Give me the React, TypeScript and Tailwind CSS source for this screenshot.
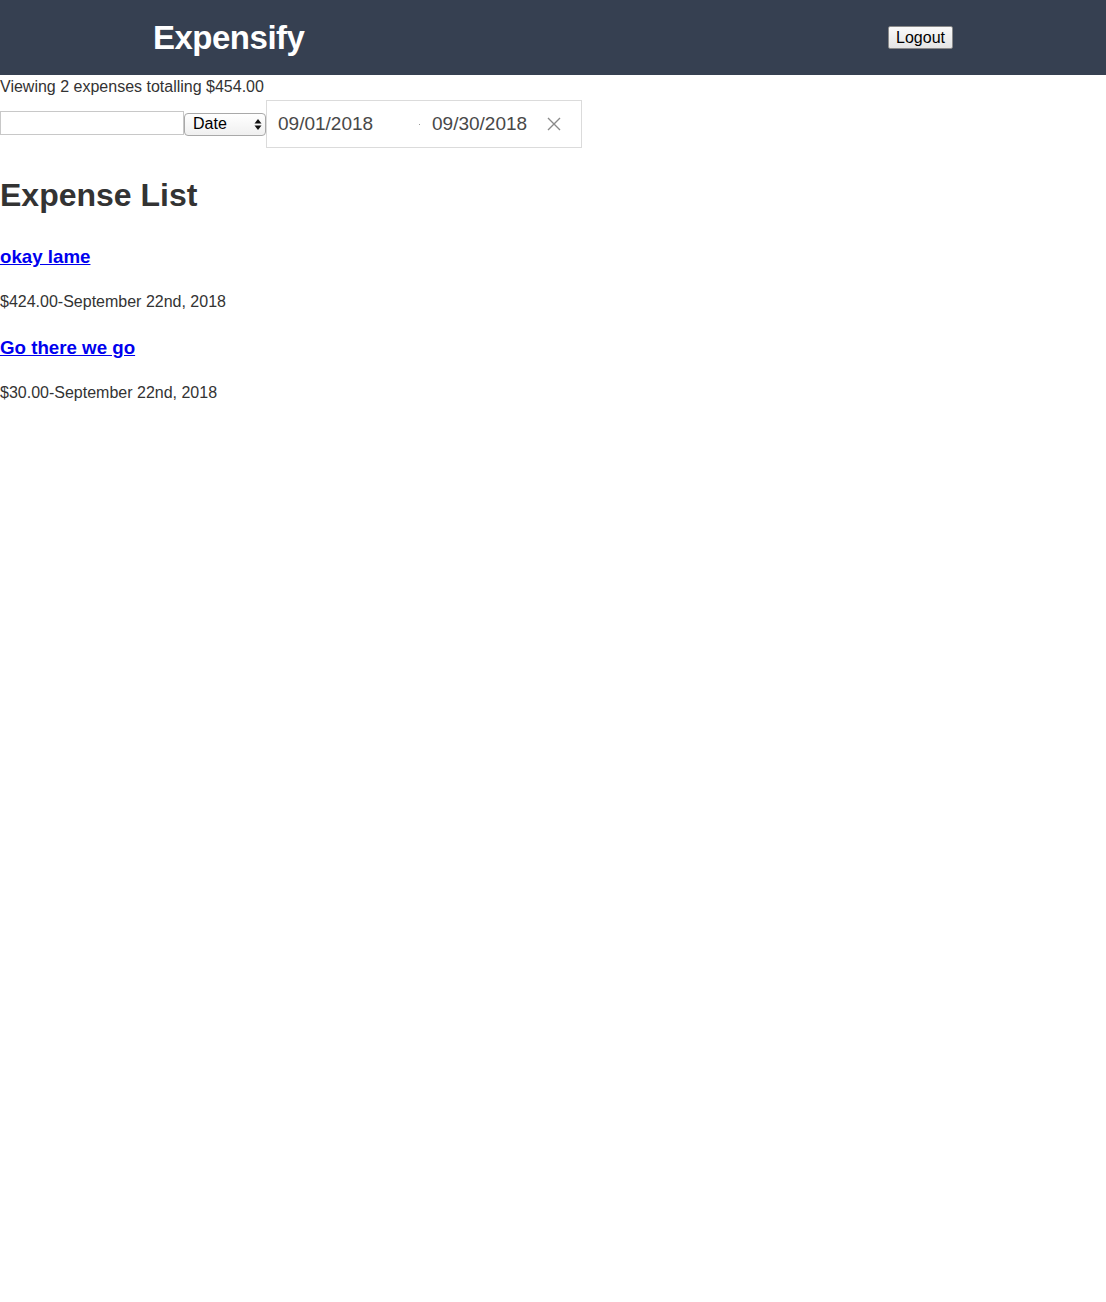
const expenses = [
  { id: "1", description: "okay lame", amount: "$424.00", date: "September 22nd, 2018" },
  { id: "2", description: "Go there we go", amount: "$30.00", date: "September 22nd, 2018" },
];

const Header = () => (
  <header className="h-[75px] bg-[#364051]">
    <div className="mx-auto flex h-full max-w-[800px] items-center justify-between">
      <h1 className="m-0 text-[33px] font-bold tracking-[-0.5px] text-white">Expensify</h1>
      <button className="h-[23px] rounded-[2px] border border-[#8a8a8a] bg-gradient-to-b from-[#fafafa] to-[#e4e4e4] px-[7px] text-[16px] leading-none text-black">
        Logout
      </button>
    </div>
  </header>
);

const Filters = () => (
  <div className="flex items-center">
    <input
      type="text"
      className="mb-[2px] h-[24px] w-[184px] border border-[#c8c8c8] bg-white"
    />
    <div className="flex h-[23px] w-[82px] items-center justify-between rounded-[4px] border border-[#a9a9a9] bg-gradient-to-b from-[#ffffff] to-[#f0f0f0] pl-[8px] pr-[3px] text-[16px] text-black">
      <span>Date</span>
      <svg width="8" height="13" viewBox="0 0 8 13">
        <path d="M4 1 L7.5 5.5 L0.5 5.5 Z" fill="#111" />
        <path d="M4 12 L7.5 7.5 L0.5 7.5 Z" fill="#111" />
      </svg>
    </div>
    {/* date range picker */}
    <div className="flex h-[48px] w-[316px] items-center border border-[#dbdbdb] bg-white text-[19px] text-[#484848]">
      <span className="ml-[11px] w-[130px]">09/01/2018</span>
      <span className="ml-[11px] mr-[12px] h-[1px] w-[1px] bg-[#999]" />
      <span className="w-[110px]">09/30/2018</span>
      <svg className="ml-[5px]" width="14" height="14" viewBox="0 0 14 14">
        <path d="M1 1 L13 13 M13 1 L1 13" stroke="#8a8a8a" strokeWidth="1.4" />
      </svg>
    </div>
  </div>
);

export default function App() {
  return (
    <div className="min-h-[1302px] bg-white font-['Liberation_Sans','Helvetica',sans-serif] text-[#333]">
      <Header />
      <p className="m-0 h-[25px] pt-[2px] text-[16px] leading-[20px]">
        Viewing 2 expenses totalling $454.00
      </p>
      <Filters />
      <h1 className="mt-[27px] mb-0 text-[32px] font-bold leading-[40px]">Expense List</h1>
      <div className="mt-[30px]">
        {expenses.map((expense) => (
          <div key={expense.id} className="mb-[24px]">
            <a href="#" className="text-[18.72px] font-bold leading-[24px] text-[#0000ee] underline">
              {expense.description}
            </a>
            <p className="mt-[22px] mb-0 text-[16px] leading-[20px]">
              {expense.amount}-{expense.date}
            </p>
          </div>
        ))}
      </div>
    </div>
  );
}
